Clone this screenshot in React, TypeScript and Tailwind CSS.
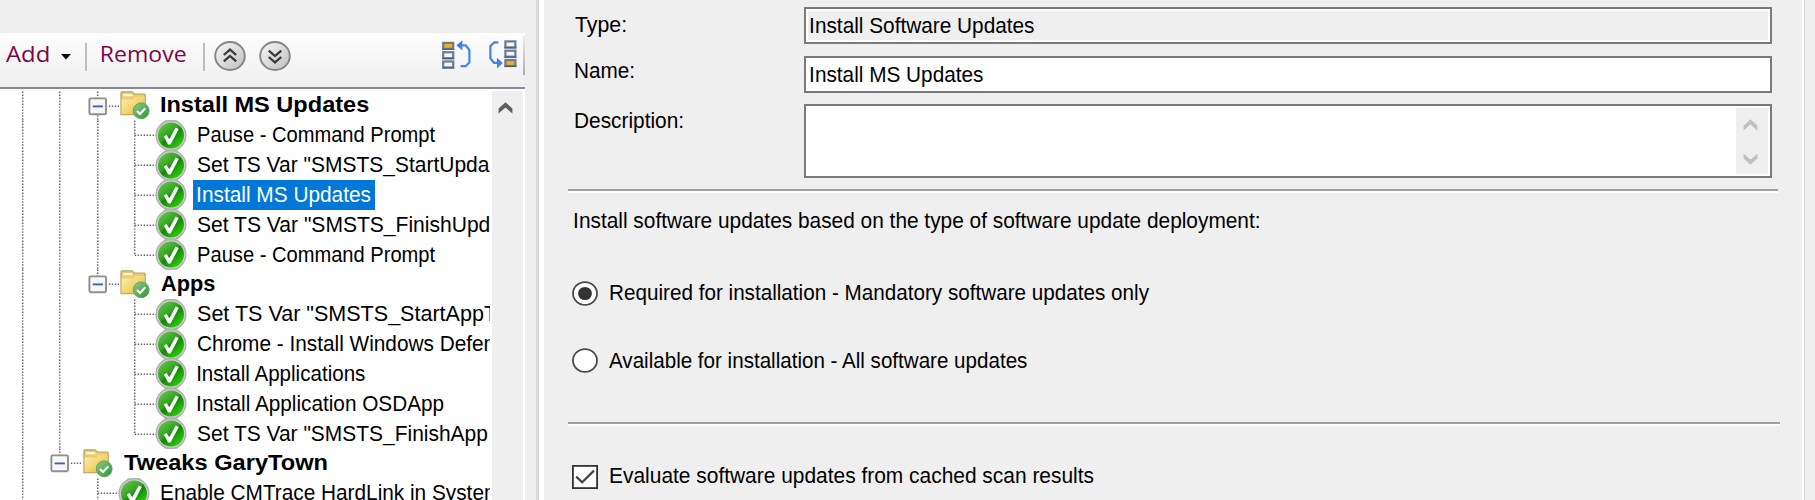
import { useLayoutEffect, useRef, useState, type ReactNode } from 'react'

type FitProps = { text: string; width: number; className?: string }

/* Stretches a line of text so that its ink spans exactly the given width. */
function Fit({ text, width, className = '' }: FitProps) {
  const ref = useRef<HTMLSpanElement>(null)
  const [transform, setTransform] = useState('none')
  useLayoutEffect(() => {
    const el = ref.current
    const ctx = document.createElement('canvas').getContext('2d')
    if (!el || !ctx) return
    const s = getComputedStyle(el)
    ctx.font = `${s.fontWeight} ${s.fontSize} ${s.fontFamily}`
    const m = ctx.measureText(text)
    const scale = width / (m.actualBoundingBoxLeft + m.actualBoundingBoxRight)
    setTransform(`translateX(${m.actualBoundingBoxLeft * scale}px) scaleX(${scale})`)
  }, [text, width])
  return (
    <span className={`block shrink-0 whitespace-nowrap ${className}`} style={{ width }}>
      <span ref={ref} className="inline-block origin-left" style={{ transform }}>{text}</span>
    </span>
  )
}

type Cell = 'v' | 'n' | 't' | 'l' | 'box' | 'boxEnd'

function Guide({ kind }: { kind: Cell }) {
  const dash = { stroke: '#666', strokeWidth: 1.5, strokeDasharray: '1.45 1.533' }
  const box = kind === 'box' || kind === 'boxEnd'
  return (
    <svg className="h-[29.83px] w-[37.3px] shrink-0 overflow-visible" viewBox="0 0 37.3 29.83">
      {(kind === 'v' || kind === 't' || kind === 'box') && <path d="M18.7 0.5V29.8" {...dash} />}
      {(kind === 'l' || kind === 'boxEnd') && <path d="M18.7 0.5V15.6" {...dash} />}
      {(kind === 't' || kind === 'l') && <path d="M18.7 15.3H40" {...dash} />}
      {box && (
        <>
          <path d="M29.8 15.3H40" {...dash} />
          <rect x="10.4" y="7.4" width="16.6" height="15.8" rx="1.2" fill="#f7f7f7" stroke="#8f8f8f" strokeWidth="1.9" />
          <path d="M13.7 15.4H23.9" stroke="#4060ae" strokeWidth="1.9" />
        </>
      )}
    </svg>
  )
}

function CheckIcon() {
  return (
    <svg className="h-[31px] w-[32px] shrink-0" viewBox="0 0 32 31">
      <defs>
        <linearGradient id="green" x1="0.1" y1="0.1" x2="0.8" y2="0.95">
          <stop offset="0" stopColor="#62c44a" />
          <stop offset="0.45" stopColor="#2fa01e" />
          <stop offset="0.53" stopColor="#148508" />
          <stop offset="1" stopColor="#2ed10a" />
        </linearGradient>
      </defs>
      <path d="M10 0.3H22L26 4V27L22 30.7H10L6 27V4Z" fill="#b5b5b5" />
      <circle cx="16" cy="15.5" r="14.9" fill="#cdcdcd" stroke="#adadad" strokeWidth="1.2" />
      <circle cx="16" cy="15.5" r="13" fill="url(#green)" />
      <path d="M8.8 16.6L11.6 15.1L14.3 19.2L20.7 7.4L23.8 9L15.6 24.6H13.1Z" fill="#fff" />
    </svg>
  )
}

function FolderIcon() {
  return (
    <svg className="h-[29px] w-[31px] shrink-0" viewBox="0 0 31 29">
      <defs>
        <linearGradient id="folder" x1="0" y1="0" x2="1" y2="1">
          <stop offset="0" stopColor="#fbeeb0" />
          <stop offset="0.5" stopColor="#f3d774" />
          <stop offset="1" stopColor="#e2b233" />
        </linearGradient>
        <linearGradient id="badge" x1="0" y1="0" x2="1" y2="1">
          <stop offset="0" stopColor="#8ccb8a" />
          <stop offset="1" stopColor="#2f9435" />
        </linearGradient>
      </defs>
      <path d="M1 1.8Q1 0.9 2 0.9H12L14.5 3H24.3Q25.2 3 25.2 4V23.6H1Z" fill="#e9cd72" stroke="#b7a068" strokeWidth="1.2" />
      <path d="M3.2 3H11.6L13 5.2H3.2Z" fill="#fdf7d6" />
      <path d="M1.6 8.4H13L15.2 6H24.6V23.2H1.6Z" fill="url(#folder)" />
      <circle cx="21.2" cy="19.8" r="7.9" fill="url(#badge)" stroke="#5aa35b" strokeWidth="0.9" />
      <path d="M17 20L20 23L25.3 17.2" fill="none" stroke="#fff" strokeWidth="2.1" />
    </svg>
  )
}

type Row = { cells: Cell[]; text: string; width: number; folder?: boolean; selected?: boolean }

const rows: Row[] = [
  { cells: ['v', 'v', 'box'], text: 'Install MS Updates', width: 208, folder: true },
  { cells: ['v', 'v', 'v', 't'], text: 'Pause - Command Prompt', width: 237 },
  { cells: ['v', 'v', 'v', 't'], text: 'Set TS Var "SMSTS_StartUpda', width: 292.5 },
  { cells: ['v', 'v', 'v', 't'], text: 'Install MS Updates', width: 173, selected: true },
  { cells: ['v', 'v', 'v', 't'], text: 'Set TS Var "SMSTS_FinishUpd', width: 291.5 },
  { cells: ['v', 'v', 'v', 'l'], text: 'Pause - Command Prompt', width: 237 },
  { cells: ['v', 'v', 'boxEnd'], text: 'Apps', width: 54, folder: true },
  { cells: ['v', 'v', 'n', 't'], text: 'Set TS Var "SMSTS_StartAppT', width: 299 },
  { cells: ['v', 'v', 'n', 't'], text: 'Chrome - Install Windows Defen', width: 296 },
  { cells: ['v', 'v', 'n', 't'], text: 'Install Applications', width: 168.5 },
  { cells: ['v', 'v', 'n', 't'], text: 'Install Application OSDApp', width: 247 },
  { cells: ['v', 'v', 'n', 'l'], text: 'Set TS Var "SMSTS_FinishApp', width: 290 },
  { cells: ['v', 'boxEnd'], text: 'Tweaks GaryTown', width: 203.5, folder: true },
  { cells: ['v', 'n', 't'], text: 'Enable CMTrace HardLink in System', width: 339 },
]

function TreeRow({ row }: { row: Row }) {
  return (
    <div className="flex h-[29.83px] shrink-0 items-center pl-1">
      {row.cells.map((c, i) => <Guide key={i} kind={c} />)}
      {row.folder ? (
        <>
          <div className="ml-[4.2px] flex"><FolderIcon /></div>
          <Fit text={row.text} width={row.width} className="ml-[10px] font-bold" />
        </>
      ) : (
        <>
          <div className="ml-[2px] flex"><CheckIcon /></div>
          <div className={`ml-[6px] flex h-[30px] items-center pl-[4.7px] ${row.selected ? 'bg-[#0078d7] pr-[4.3px] text-white' : ''}`}>
            <Fit text={row.text} width={row.width} />
          </div>
        </>
      )}
    </div>
  )
}

function RoundButton({ down = false }: { down?: boolean }) {
  return (
    <svg className="h-[32px] w-[32px] shrink-0" viewBox="0 0 32 32">
      <defs>
        <linearGradient id="metal" x1="0" y1="0" x2="1" y2="1">
          <stop offset="0" stopColor="#fafafa" />
          <stop offset="1" stopColor="#bdbdbd" />
        </linearGradient>
      </defs>
      <ellipse cx="16" cy="16" rx="14.8" ry="14" fill="url(#metal)" stroke="#858585" strokeWidth="1.9" />
      <g fill="none" stroke="#3a3a3a" strokeWidth="2.3" transform={down ? 'rotate(180 16 16)' : undefined}>
        <path d="M9.8 15L16 9.6L22.2 15" />
        <path d="M9.8 21.4L16 16L22.2 21.4" />
      </g>
    </svg>
  )
}

function MoveIcon({ down = false }: { down?: boolean }) {
  const x = down ? 17.4 : 1.2
  const top = down ? 1.4 : 2.9
  const hot = down ? 2 : 0
  return (
    <svg className="h-[30px] w-[30px] shrink-0" viewBox="0 0 30 30">
      {[0, 1, 2].map((i) => (
        <g key={i}>
          <rect x={x} y={top + i * 9.3} width="10" height="6" fill={i === hot ? '#f2ae1d' : '#f4f6fa'} stroke="#6c7b92" strokeWidth="2.2" />
          <path d={`M${x - 1} ${top + i * 9.3 + 6.4}H${x + 11}`} stroke="#4d5b70" strokeWidth="1.2" />
        </g>
      ))}
      {down ? (
        <>
          <path d="M10.4 2.4H6.4L2.4 6V18.4L6 22.8H10" fill="none" stroke="#4583e6" strokeWidth="2.2" />
          <path d="M9 17.8L14.8 22.9L9 28.4Z" fill="#3f7fe6" />
        </>
      ) : (
        <>
          <path d="M18.6 26.2H23.6L27.4 22.6V10.2L23.8 5.4H19.6" fill="none" stroke="#4583e6" strokeWidth="2.2" />
          <path d="M20.4 0.2L14.4 5.2L20.4 10.4Z" fill="#3f7fe6" />
        </>
      )}
    </svg>
  )
}

function Chevron({ down = false, className }: { down?: boolean; className: string }) {
  return (
    <svg className={`h-[12px] w-[15px] ${className}`} viewBox="0 0 15 12">
      <path d={down ? 'M0.6 0.5L7.5 6.5L14.4 0.5V5.4L7.5 11.8L0.6 5.4Z' : 'M0.6 11.5L7.5 5.5L14.4 11.5V6.6L7.5 0.2L0.6 6.6Z'} fill="currentColor" />
    </svg>
  )
}

function LeftPane() {
  return (
    <div className="flex w-[536px] shrink-0 flex-col">
      <div className="h-[33px] shrink-0" />
      <div className="flex h-[54px] w-[525px] shrink-0 items-start bg-linear-to-b from-[#fdfdfd] to-[#efefef] pl-[6px] font-['Open_Sans',sans-serif] text-[21.5px] leading-[30px] text-[#7d0548]">
        <Fit text="Add" width={43} className="mt-[6px]" />
        <svg className="ml-[12px] mt-[20px] h-[7px] w-[10px] shrink-0" viewBox="0 0 10 7"><path d="M0 1H10L5 6.6Z" fill="#000" /></svg>
        <div className="ml-[14px] mt-[10px] h-[28px] w-[1.5px] shrink-0 bg-[#bdbdbd]" />
        <Fit text="Remove" width={83.5} className="ml-[15.5px] mt-[6px]" />
        <div className="ml-[17.5px] mt-[10px] h-[28px] w-[1.5px] shrink-0 bg-[#bdbdbd]" />
        <div className="ml-[9.5px] mt-[7px] flex gap-[13px]">
          <RoundButton />
          <RoundButton down />
        </div>
        <div className="ml-[151px] mt-[7px] flex gap-[15.5px]">
          <MoveIcon />
          <MoveIcon down />
        </div>
        <div className="ml-auto mt-[3px] h-[39px] w-[2px] bg-linear-to-b from-[#ededed] to-[#acacac]" />
      </div>
      <div className="h-[2px] w-[525px] shrink-0 bg-[#858b97]" />
      <div className="flex min-h-0 w-[525px] flex-1 bg-white pt-[1.5px]">
        <div className="flex w-[490px] shrink-0 flex-col overflow-hidden">
          {rows.map((r, i) => <TreeRow key={i} row={r} />)}
        </div>
        <div className="ml-[1.5px] flex w-[31.5px] justify-center bg-[#efefef] pt-[11px] text-[#606060]">
          <Chevron className="-ml-[3px]" />
        </div>
      </div>
    </div>
  )
}

function Field({ label, labelWidth, labelClass, height, children }: { label: string; labelWidth: number; labelClass: string; height: string; children: ReactNode }) {
  return (
    <div className={`flex items-start pl-[31px] ${height}`}>
      <div className={`w-[229.5px] shrink-0 ${labelClass}`}>
        <Fit text={label} width={labelWidth} />
      </div>
      {children}
    </div>
  )
}

function Radio({ checked = false }: { checked?: boolean }) {
  return (
    <svg className="h-[25px] w-[26px] shrink-0" viewBox="0 0 26 25">
      <ellipse cx="13" cy="12.5" rx="12" ry="11.4" fill="#fff" stroke="#4a4a4a" strokeWidth="1.8" />
      {checked && <ellipse cx="13" cy="12.5" rx="6.9" ry="6.6" fill="#333" />}
    </svg>
  )
}

function Rule({ width }: { width: string }) {
  return (
    <div className={`ml-[24.5px] shrink-0 ${width}`}>
      <div className="h-[2px] bg-[#a0a0a0]" />
      <div className="h-[2px] bg-white" />
    </div>
  )
}

function RightPane() {
  return (
    <div className="flex w-[1258px] shrink-0 flex-col">
      <Field label="Type:" labelWidth={51} labelClass="mt-[2.5px]" height="mt-[7px] h-[49px]">
        <div className="flex h-[37px] w-[967.5px] items-center border-2 border-[#7a7a7a] bg-white p-[2px]">
          <div className="flex h-full w-full items-center bg-[#efefef] pl-[2.5px]">
            <Fit text="Install Software Updates" width={223.5} />
          </div>
        </div>
      </Field>
      <Field label="Name:" labelWidth={59} labelClass="mt-[0px]" height="h-[48px]">
        <div className="flex h-[37px] w-[967.5px] items-center border-2 border-[#7a7a7a] bg-white pl-[4.5px]">
          <Fit text="Install MS Updates" width={172.5} />
        </div>
      </Field>
      <Field label="Description:" labelWidth={108} labelClass="mt-[1.5px]" height="h-[85px]">
        <div className="flex h-[74px] w-[967.5px] justify-end border-2 border-[#7a7a7a] bg-white p-[2px]">
          <div className="flex w-[31.5px] flex-col items-center justify-between bg-[#efefef] pb-[9px] pt-[10.5px] text-[#c1c1c1]">
            <Chevron className="-ml-[2px]" />
            <Chevron down className="-ml-[2px]" />
          </div>
        </div>
      </Field>
      <Rule width="w-[1210px]" />
      <Fit text="Install software updates based on the type of software update deployment:" width={684.5} className="ml-[31.5px] mt-[13px]" />
      <div className="ml-[28px] mt-[44.5px] flex h-[25px] items-center gap-[12px]">
        <Radio checked />
        <Fit text="Required for installation - Mandatory software updates only" width={539} />
      </div>
      <div className="ml-[28px] mt-[42px] flex h-[25px] items-center gap-[11.5px]">
        <Radio />
        <Fit text="Available for installation - All software updates" width={419.5} className="mt-[1px]" />
      </div>
      <div className="h-[49.5px] shrink-0" />
      <Rule width="w-[1212px]" />
      <div className="ml-[28px] mt-[39px] flex h-[24px] items-center gap-[12px]">
        <svg className="h-[24px] w-[26px] shrink-0" viewBox="0 0 26 24">
          <rect x="0.9" y="0.9" width="24.2" height="22.2" fill="#fff" stroke="#333" strokeWidth="1.8" />
          <path d="M4.2 11.6L10.2 17.3L22 5.6" fill="none" stroke="#444" strokeWidth="2.2" />
        </svg>
        <Fit text="Evaluate software updates from cached scan results" width={484} className="-mt-[2px]" />
      </div>
    </div>
  )
}

export default function App() {
  return (
    <div className="flex h-[500px] w-[1815px] overflow-hidden bg-[#efefef] font-['Liberation_Sans',sans-serif] text-[22px] leading-[30px] text-black">
      <LeftPane />
      <div className="w-[2.5px] shrink-0 bg-[#d8d8d8]" />
      <div className="w-[5px] shrink-0 bg-white" />
      <RightPane />
      <div className="w-[2px] shrink-0 bg-white" />
      <div className="w-[1.5px] shrink-0 bg-[#d8d8d8]" />
    </div>
  )
}
